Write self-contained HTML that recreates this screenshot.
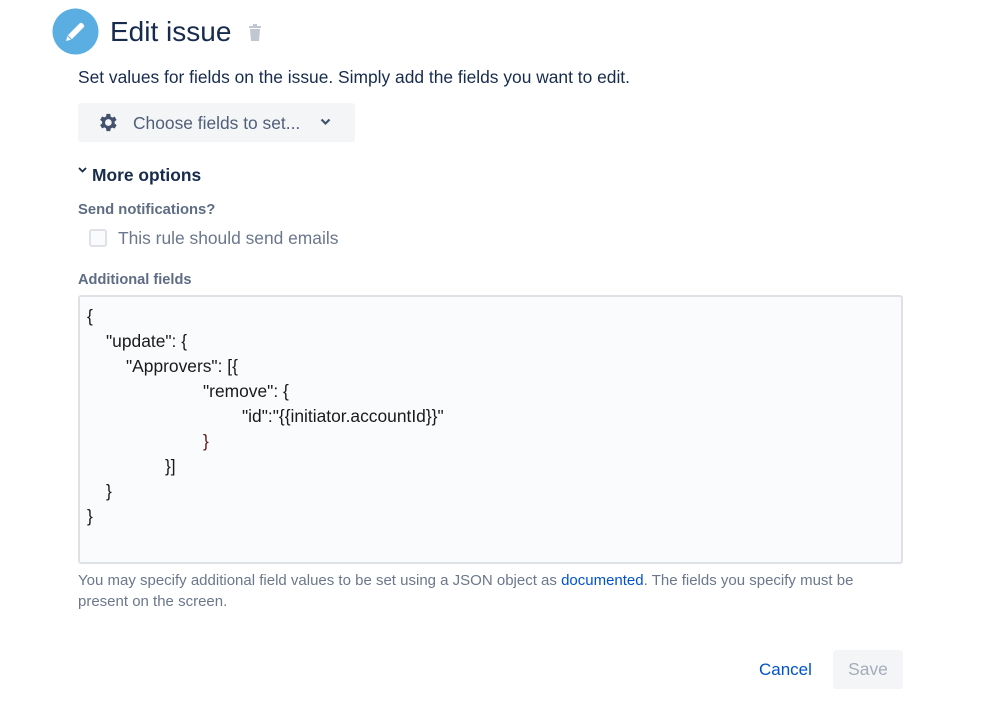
<!DOCTYPE html>
<html><head><meta charset="utf-8"><style>
body{margin:0;width:986px;height:705px;background:#fff;font-family:"Liberation Sans",Arial,sans-serif;position:relative;overflow:hidden;color:#172b4d}
.a{position:absolute;white-space:nowrap}
.code div{position:absolute;font-size:17.4px;color:#1a1a1a;white-space:nowrap}
</style></head><body>
<svg class="a" style="left:52px;top:8px" width="47" height="47" viewBox="0 0 47 47">
<circle cx="23.5" cy="23.5" r="23" fill="#5aaee2"/>
<path d="M14 33 L15.5 27.5 L27.5 15.5 Q29 14 30.5 15.5 L31.5 16.5 Q33 18 31.5 19.5 L19.5 31.5 Z" fill="#fff"/>
<path d="M15.5 27.5 L19.5 31.5" stroke="#5aaee2" stroke-width="1"/>
</svg>
<div class="a" style="left:110px;top:16px;font-size:28px;color:#172b4d">Edit issue</div>
<svg class="a" style="left:248px;top:24px" width="14" height="18" viewBox="0 0 14 18">
<rect x="1" y="2" width="12" height="2" fill="#c1c7d0"/><rect x="5" y="0" width="4" height="2" fill="#c1c7d0"/>
<path d="M2 5 H12 L11 17 H3 Z" fill="#c1c7d0"/></svg>
<div class="a" style="left:78px;top:67px;font-size:17.4px;color:#172b4d">Set values for fields on the issue. Simply add the fields you want to edit.</div>
<div class="a" style="left:78px;top:103px;width:277px;height:39px;background:#f4f5f7;border-radius:3px"></div>
<svg class="a" style="left:96px;top:111px" width="23" height="23" viewBox="0 0 24 24"><path fill="#42526e" d="M19.4 13a7.5 7.5 0 000-2l2.1-1.6-2-3.5-2.5 1a7.6 7.6 0 00-1.7-1L14.9 3h-4l-.4 2.7a7.6 7.6 0 00-1.7 1l-2.5-1-2 3.5L6.4 11a7.5 7.5 0 000 2l-2.1 1.6 2 3.5 2.5-1a7.6 7.6 0 001.7 1l.4 2.9h4l.4-2.7a7.6 7.6 0 001.7-1l2.5 1 2-3.5zM12.9 15.5a3.5 3.5 0 110-7 3.5 3.5 0 010 7z"/></svg>
<div class="a" style="left:133px;top:113px;font-size:17.4px;color:#505f79">Choose fields to set...</div>
<svg class="a" style="left:320px;top:118px" width="11" height="8" viewBox="0 0 11 8"><path d="M1.5 1.5 L5.5 5.5 L9.5 1.5" stroke="#42526e" stroke-width="2.2" fill="none"/></svg>
<svg class="a" style="left:78px;top:167px" width="9" height="6" viewBox="0 0 9 6"><path d="M1 1 L4.5 4.5 L8 1" stroke="#172b4d" stroke-width="1.8" fill="none"/></svg>
<div class="a" style="left:92px;top:165px;font-size:17.4px;font-weight:bold;color:#172b4d">More options</div>
<div class="a" style="left:78px;top:202px;font-size:14.8px;font-weight:bold;color:#5e6c84">Send notifications?</div>
<div class="a" style="left:89px;top:229px;width:14px;height:14px;border:2px solid #dfe1e6;border-radius:3px;background:#fafbfc"></div>
<div class="a" style="left:118px;top:228px;font-size:17.4px;color:#6b778c">This rule should send emails</div>
<div class="a" style="left:78px;top:272px;font-size:14.6px;font-weight:bold;color:#5e6c84">Additional fields</div>
<div class="a" style="left:78px;top:295px;width:821px;height:265px;background:#fafbfc;border:2px solid #dfe1e6;border-radius:3px"></div>
<div class="code">
<div style="left:87px;top:306px">{</div>
<div style="left:106px;top:331px">"update": {</div>
<div style="left:126px;top:356px">"Approvers": [{</div>
<div style="left:203px;top:381px">"remove": {</div>
<div style="left:242px;top:406px">"id":"{{initiator.accountId}}"</div>
<div style="left:203px;top:431px;color:#5d1b1b">}</div>
<div style="left:165px;top:456px">}]</div>
<div style="left:106px;top:481px">}</div>
<div style="left:87px;top:506px">}</div>
</div>
<div class="a" style="left:78px;top:570px;font-size:15px;color:#6b778c;line-height:21px">You may specify additional field values to be set using a JSON object as <span style="color:#0052cc">documented</span>. The fields you specify must be<br>present on the screen.</div>
<div class="a" style="left:759px;top:660px;font-size:17px;color:#0052cc">Cancel</div>
<div class="a" style="left:833px;top:650px;width:70px;height:39px;background:#f4f5f7;border-radius:3px;color:#a5adba;font-size:17.4px;text-align:center;line-height:39px">Save</div>
</body></html>
